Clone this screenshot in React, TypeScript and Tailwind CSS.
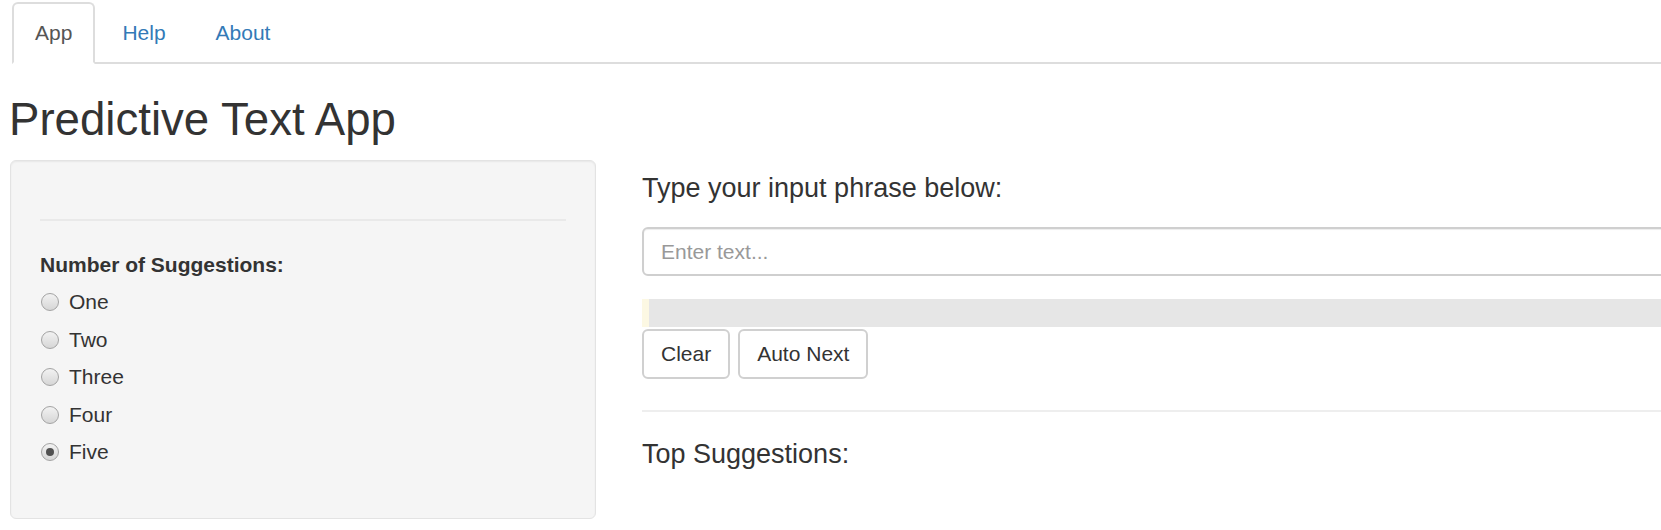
import React from "react";

const options = ["One", "Two", "Three", "Four", "Five"];

function Radio({ label, checked }: { label: string; checked?: boolean }) {
  return (
    <label className="flex items-center h-[30px] leading-[30px]">
      <span className="ml-[1px] w-[18px] h-[18px] rounded-full border border-[#a3a3a3] bg-[linear-gradient(#f2f2f2,#d6d6d6)] flex items-center justify-center shrink-0">
        {checked && <span className="w-[8px] h-[8px] rounded-full bg-[#505050]" />}
      </span>
      <span className="ml-[10px]">{label}</span>
    </label>
  );
}

export default function App() {
  return (
    <div className="w-[1661px] h-[530px] overflow-hidden bg-white text-[#333] text-[21px] font-['Liberation_Sans',Arial,sans-serif]">
      <ul className="ml-[12px] mt-[2px] flex gap-[4px] h-[62px] border-b-2 border-[#dddddd]">
        <li className="-mb-[2px]">
          <a className="flex h-[62px] items-center px-[21px] border-2 border-[#dddddd] border-b-white rounded-t-[6px] bg-white text-[#555]">
            App
          </a>
        </li>
        <li className="-mb-[2px]">
          <a className="flex h-[62px] items-center px-[21px] border-2 border-transparent text-[#337ab7]">Help</a>
        </li>
        <li className="-mb-[2px]">
          <a className="flex h-[62px] items-center px-[21px] border-2 border-transparent text-[#337ab7]">About</a>
        </li>
      </ul>

      <h2 className="mt-[32px] pl-[9px] text-[45.6px] leading-[48px]">Predictive Text App</h2>

      <div className="mt-[16px] flex items-start">
        {/* sidebar */}
        <div className="ml-[10px] w-[586px] h-[359px] shrink-0 border border-[#e3e3e3] rounded-[6px] bg-[#f5f5f5] shadow-[inset_0_1px_2px_rgba(0,0,0,0.06)] px-[29px] pt-[58px]">
          <div className="border-t-2 border-[#e9e9e9]" />
          <div className="mt-[29px] font-bold leading-[30px]">Number of Suggestions:</div>
          <div className="mt-[7px] flex flex-col gap-[7.5px]">
            {options.map((o) => (
              <Radio key={o} label={o} checked={o === "Five"} />
            ))}
          </div>
        </div>

        {/* main */}
        <div className="ml-[46px] w-[1240px] shrink-0 pt-[13px]">
          <h4 className="text-[27px] leading-[30px]">Type your input phrase below:</h4>
          <input
            className="mt-[24px] block w-full h-[49px] border-2 border-[#cfcfcf] rounded-[6px] px-[17px] text-[21px] placeholder:text-[#999] shadow-[inset_0_1px_1px_rgba(0,0,0,0.075)] outline-none"
            placeholder="Enter text..."
          />
          <div className="mt-[23px] flex h-[28px]">
            <div className="w-[7px] bg-[#fcf8e3]" />
            <div className="flex-1 bg-[#e6e6e6]" />
          </div>
          <div className="mt-[2px] flex gap-[8px]">
            <button className="h-[50px] border-2 border-[#d0d0d0] rounded-[6px] px-[17px] bg-white">Clear</button>
            <button className="h-[50px] border-2 border-[#d0d0d0] rounded-[6px] px-[17px] bg-white">Auto Next</button>
          </div>
          <div className="mt-[31px] border-t-2 border-[#eeeeee]" />
          <h4 className="mt-[27px] text-[27px] leading-[30px]">Top Suggestions:</h4>
        </div>
      </div>
    </div>
  );
}
